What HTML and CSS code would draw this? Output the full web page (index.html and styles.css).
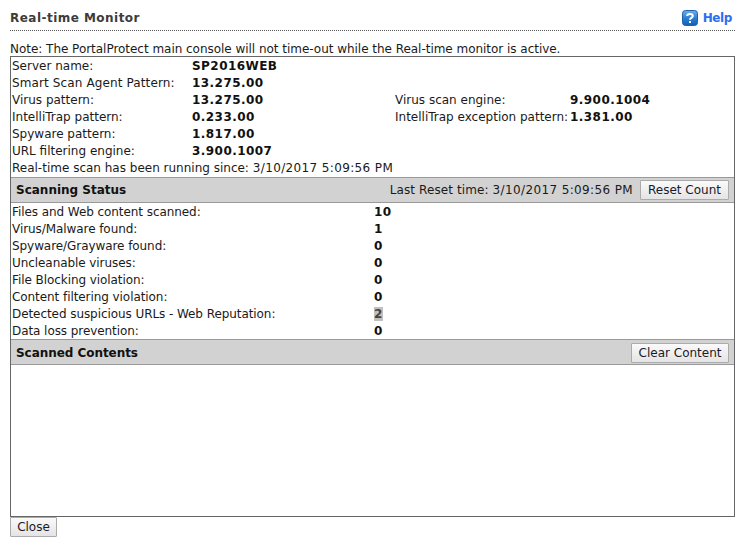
FILE: index.html
```html
<!DOCTYPE html>
<html lang="en">
<head>
<meta charset="utf-8">
<title>Real-time Monitor</title>
<link rel="stylesheet" href="styles.css">
</head>
<body>
<header class="title-bar">
  <h1 class="title">Real-time Monitor</h1>
  <a class="help" href="#">
    <svg class="help-icon" viewBox="0 0 16 16" width="16" height="16" aria-hidden="true">
      <defs><linearGradient id="hg" x1="0" y1="0" x2="0" y2="1"><stop offset="0" stop-color="#6fb0ec"/><stop offset="0.5" stop-color="#2f80d2"/><stop offset="1" stop-color="#0f5fb5"/></linearGradient></defs>
      <rect x="0.5" y="0.5" width="15" height="15" rx="3" fill="url(#hg)" stroke="#1c62ad"/>
      <path d="M5.2 6 C5.2 3.2 10.8 3.2 10.8 6 C10.8 8 8 7.8 8 9.8" fill="none" stroke="#fff" stroke-width="2"/>
      <rect x="7" y="11" width="2" height="2" fill="#fff"/>
    </svg>
    <span class="help-label">Help</span>
  </a>
</header>
<p class="note">Note: The PortalProtect main console will not time-out while the Real-time monitor is active.</p>
<main class="panel">
  <section class="info">
    <div class="info-row"><span>Server name:</span><b>SP2016WEB</b></div>
    <div class="info-row"><span class="wide">Smart Scan Agent Pattern:</span><b>13.275.00</b></div>
    <div class="info-row"><span>Virus pattern:</span><b>13.275.00</b><span>Virus scan engine:</span><b>9.900.1004</b></div>
    <div class="info-row"><span>IntelliTrap pattern:</span><b>0.233.00</b><span>IntelliTrap exception pattern:</span><b>1.381.00</b></div>
    <div class="info-row"><span>Spyware pattern:</span><b>1.817.00</b></div>
    <div class="info-row"><span>URL filtering engine:</span><b>3.900.1007</b></div>
    <div class="since">Real-time scan has been running since: <span class="date">3/10/2017 5:09:56 PM</span></div>
  </section>
  <div class="section-head">
    <h2>Scanning Status</h2>
    <div class="head-tools"><span class="reset">Last Reset time: <span class="date">3/10/2017 5:09:56 PM</span></span><button class="btn" type="button">Reset Count</button></div>
  </div>
  <section class="stats">
    <div class="stat-row"><span>Files and Web content scanned:</span><b>10</b></div>
    <div class="stat-row"><span>Virus/Malware found:</span><b>1</b></div>
    <div class="stat-row"><span>Spyware/Grayware found:</span><b>0</b></div>
    <div class="stat-row"><span>Uncleanable viruses:</span><b>0</b></div>
    <div class="stat-row"><span>File Blocking violation:</span><b>0</b></div>
    <div class="stat-row"><span>Content filtering violation:</span><b>0</b></div>
    <div class="stat-row"><span>Detected suspicious URLs - Web Reputation:</span><b><mark class="hl">2</mark></b></div>
    <div class="stat-row"><span>Data loss prevention:</span><b>0</b></div>
  </section>
  <div class="section-head section-head-low">
    <h2>Scanned Contents</h2>
    <div class="head-tools"><button class="btn btn-clear" type="button">Clear Content</button></div>
  </div>
  <section class="contents"></section>
</main>
<button class="btn close" type="button">Close</button>
</body>
</html>
```
FILE: styles.css
```css
* { box-sizing: border-box; }
html, body { margin: 0; background: #fff; }
body {
  width: 750px;
  height: 555px;
  overflow: hidden;
  padding: 0 15px 0 10px;
  font-family: "DejaVu Sans", Verdana, sans-serif;
  font-size: 12px;
  line-height: 17px;
  color: #1a1a1a;
}
.title-bar {
  height: 31px;
  border-bottom: 1px dotted #555;
  display: flex;
  justify-content: space-between;
  align-items: flex-start;
  padding-top: 10px;
}
.title { margin: 0; font-size: 12px; font-weight: bold; line-height: 17px; color: #3c3c3c; letter-spacing: .47px; }
.help {
  display: flex;
  gap: 5px;
  align-items: center;
  font-weight: bold;
  color: #2a70ee;
  text-decoration: none;
  font-size: 12px;
  line-height: 16px;
  margin-right: 3px;
}
.help-label { letter-spacing: -.4px; }
.help-icon { display: block; }
.note { margin: 10px 0 0; height: 15px; line-height: 17px; letter-spacing: -.03px; }
.panel {
  height: 461px;
  border: 1px solid #666;
  display: flex;
  flex-direction: column;
}
.info { padding: 1px 1px 0; height: 120px; }
.info-row { display: grid; grid-template-columns: 180px 203px 175px 1fr; height: 17px; }
.info-row b, .stat-row b { color: #111; letter-spacing: .45px; }
.wide { letter-spacing: .12px; }
.since { height: 17px; }
.date { letter-spacing: .37px; }
.section-head {
  background: #d2d2d2;
  border-top: 1px solid #999;
  border-bottom: 1px solid #999;
  height: 26px;
  flex: none;
  display: flex;
  justify-content: space-between;
  align-items: center;
  padding: 0 5px;
}
.section-head-low { padding-top: 1px; }
.section-head-low h2 { padding-top: 1px; letter-spacing: -.05px; }
.section-head h2 { margin: 0; font-size: 12px; font-weight: bold; color: #111; }
.head-tools { display: flex; align-items: center; gap: 7px; }
.reset { letter-spacing: .1px; }
.btn {
  font-family: "DejaVu Sans", Verdana, sans-serif;
  font-size: 12px;
  height: 20px;
  line-height: 16px;
  padding: 0 7px;
  color: #1a1a2a;
  background: linear-gradient(#fafafa, #e4e4e4);
  border: 1px solid #ababab;
  border-radius: 1px;
}
.btn-clear { padding: 0 6.5px; }
.stats { padding: 1px 1px 0; height: 136px; flex: none; }
.stat-row { display: grid; grid-template-columns: 362px 1fr; height: 17px; }
.stat-row span { letter-spacing: -.07px; }
.hl { background: #c0c0c0; color: #444; }
.contents { flex: 1; }
.close { display: block; width: 47px; padding: 0; }
```
